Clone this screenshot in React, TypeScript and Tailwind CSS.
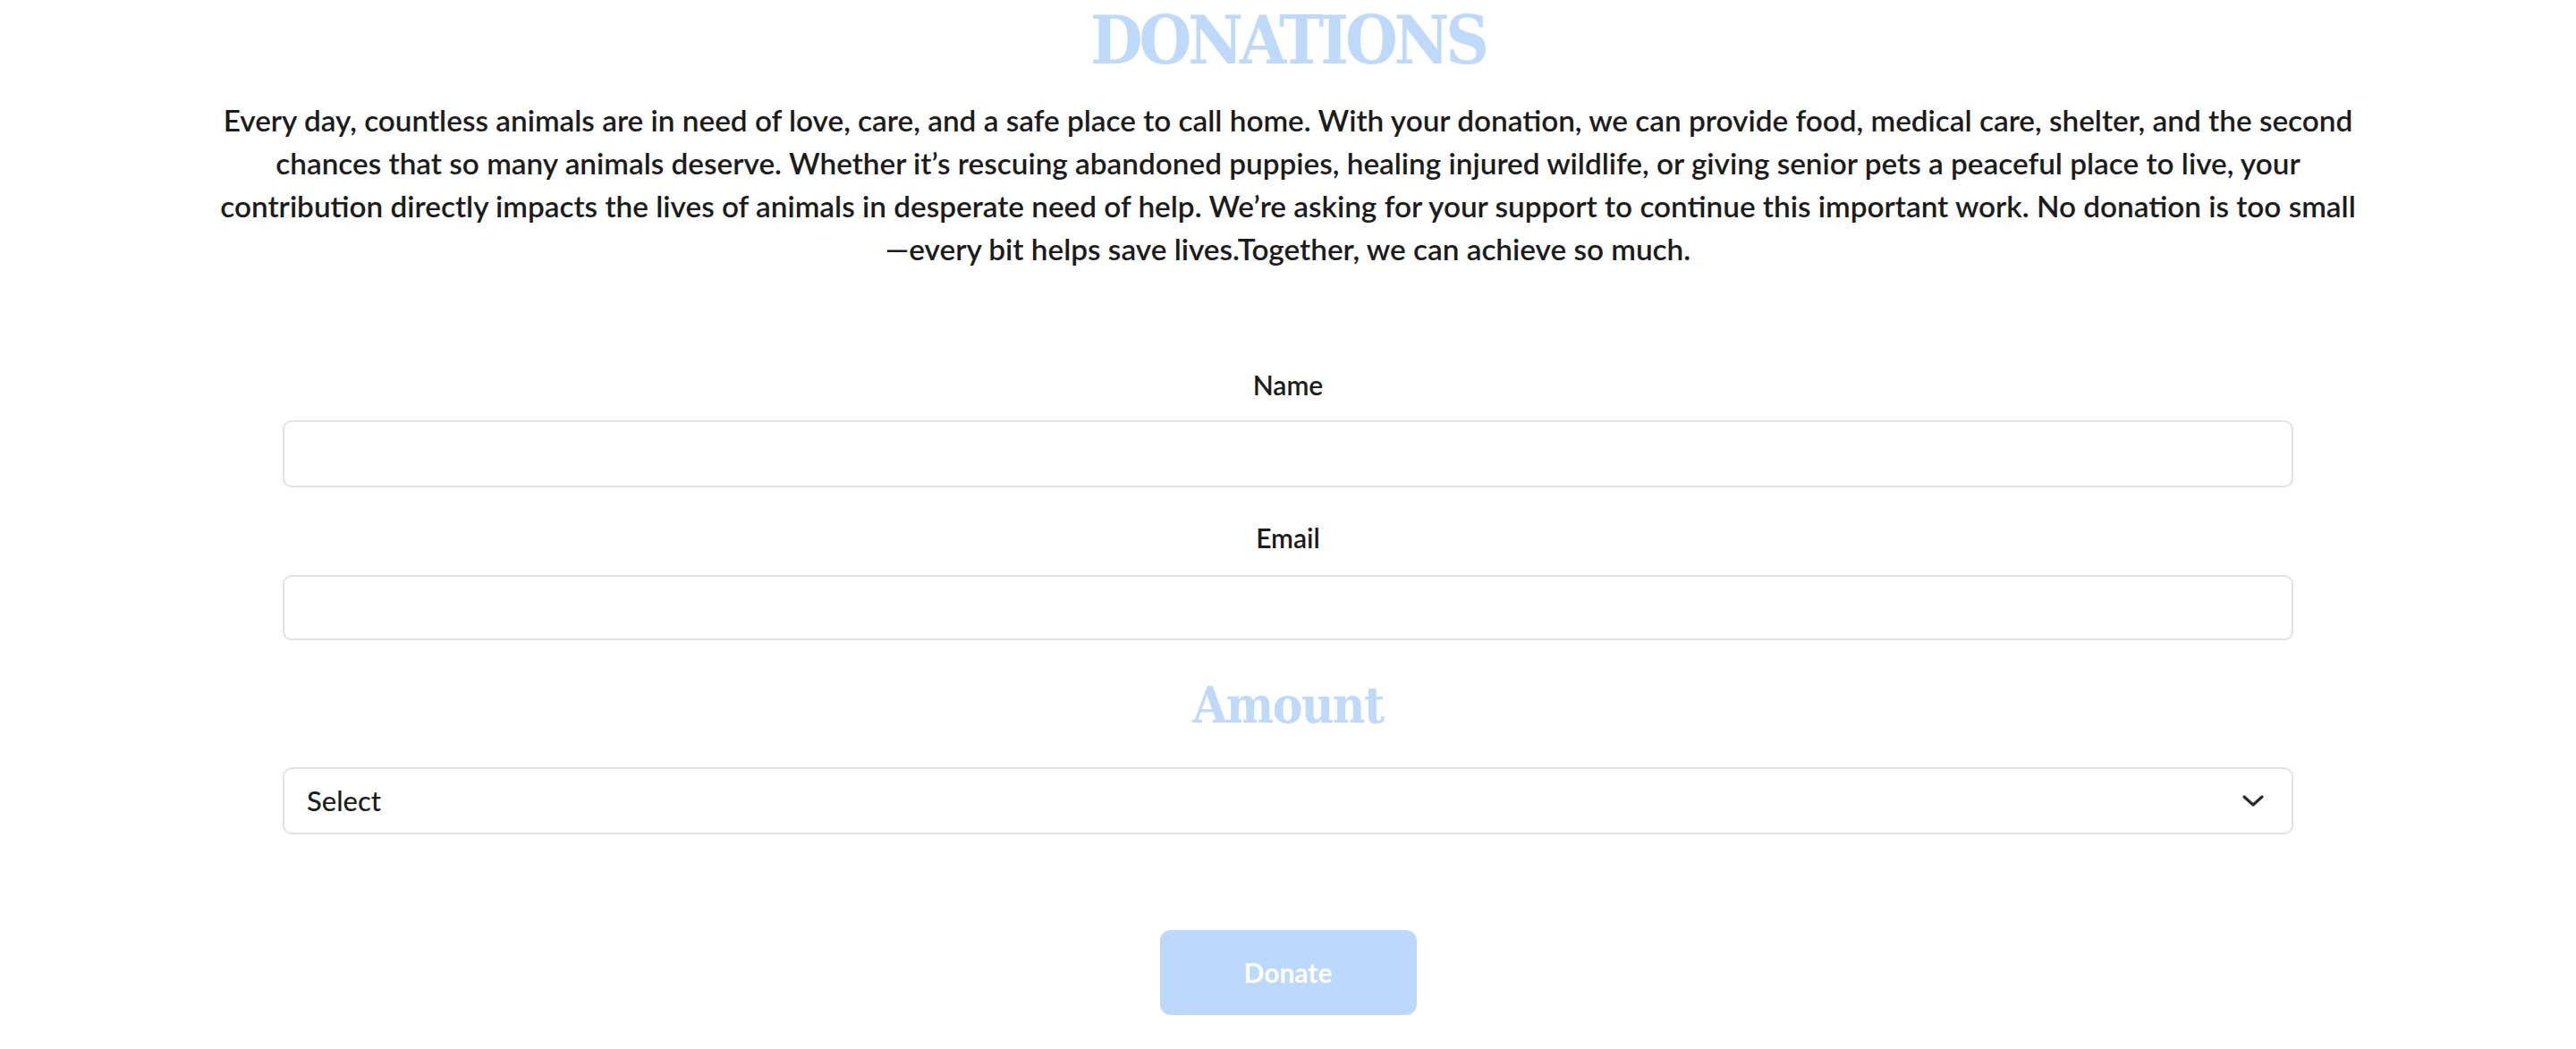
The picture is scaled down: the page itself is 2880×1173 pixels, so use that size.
import React from "react";

const serif = { fontFamily: '"DejaVu Serif Condensed", "DejaVu Serif", "Liberation Serif", serif' };

export default function App() {
  return (
    <div className="w-full min-h-[1173px] bg-white flex flex-col items-center text-[#1c1c1c] font-['Lato','Open_Sans',sans-serif]">
      <h1
        className="text-[75px] leading-[90px] font-bold text-[#bfd9fb] tracking-[-4px]"
        style={serif}
      >
        DONATIONS
      </h1>
      <p className="mt-[20px] w-[2700px] text-center text-[33.3px] leading-[48px] font-semibold">
        Every day, countless animals are in need of love, care, and a safe place to call home. With your donation, we can provide food, medical care, shelter, and the second
        <br />
        chances that so many animals deserve. Whether it’s rescuing abandoned puppies, healing injured wildlife, or giving senior pets a peaceful place to live, your
        <br />
        contribution directly impacts the lives of animals in desperate need of help. We’re asking for your support to continue this important work. No donation is too small
        <br />
        —every bit helps save lives.Together, we can achieve so much.
      </p>

      <form className="w-[2248px] flex flex-col items-center" onSubmit={(e) => e.preventDefault()}>
        <label className="mt-[108px] text-[30px] leading-[40px] font-semibold">Name</label>
        <input
          type="text"
          className="mt-[20px] w-full h-[75px] rounded-[10px] border-2 border-[#e2e2e2] bg-white px-6 outline-none"
        />
        <label className="mt-[36px] text-[30px] leading-[40px] font-semibold">Email</label>
        <input
          type="email"
          className="mt-[22px] w-full h-[73px] rounded-[10px] border-2 border-[#e2e2e2] bg-white px-6 outline-none"
        />
        <h2
          className="mt-[42px] text-[56px] leading-[60px] font-bold text-[#bfd9fb] tracking-[-1.5px]"
          style={serif}
        >
          Amount
        </h2>
        <div className="mt-[40px] w-full h-[75px] rounded-[10px] border-2 border-[#e2e2e2] bg-white flex items-center justify-between pl-[25px] pr-[30px]">
          <span className="text-[31px] font-medium">Select</span>
          <svg width="26" height="16" viewBox="0 0 26 16" fill="none">
            <path d="M3 3 L13 12 L23 3" stroke="#2a2a2a" strokeWidth="3.2" strokeLinecap="round" strokeLinejoin="round" />
          </svg>
        </div>
        <button
          type="submit"
          className="mt-[107px] w-[287px] h-[95px] rounded-[12px] bg-[#bcd8fa] text-white text-[30px] font-bold"
        >
          Donate
        </button>
      </form>
    </div>
  );
}
